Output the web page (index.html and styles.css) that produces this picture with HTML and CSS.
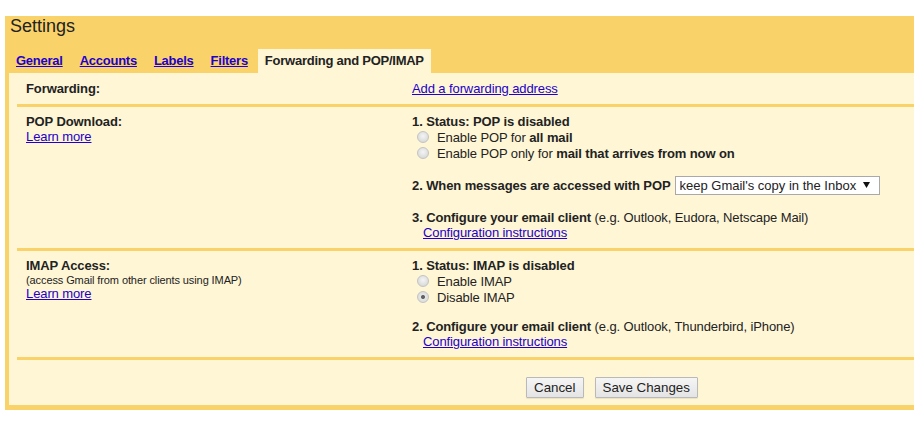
FILE: index.html
```html
<!DOCTYPE html>
<html lang="en">
<head>
<meta charset="utf-8">
<title>Settings</title>
<link rel="stylesheet" href="styles.css">
</head>
<body>
<div class="settings">
  <h1 class="title">Settings</h1>
  <nav class="tabs">
    <a class="tab" href="#">General</a>
    <a class="tab" href="#">Accounts</a>
    <a class="tab" href="#">Labels</a>
    <a class="tab" href="#">Filters</a>
    <span class="tab active">Forwarding and POP/IMAP</span>
  </nav>
  <div class="panel">
    <div class="row row-forward">
      <div class="label"><b>Forwarding:</b></div>
      <div class="value"><a href="#">Add a forwarding address</a></div>
    </div>

    <div class="row">
      <div class="label">
        <div class="line"><b>POP Download:</b></div>
        <div class="line"><a href="#">Learn more</a></div>
      </div>
      <div class="value">
        <div class="line"><b>1. Status: POP is disabled</b></div>
        <label class="option"><input type="radio" name="pop" class="radio"><span>Enable POP for <b>all mail</b></span></label>
        <label class="option"><input type="radio" name="pop" class="radio"><span>Enable POP only for <b>mail that arrives from now on</b></span></label>
        <div class="step step-select">
          <b>2. When messages are accessed with POP</b>
          <span class="select">
            <span>keep Gmail's copy in the Inbox</span>
            <svg width="7" height="6" viewBox="0 0 7 6"><path d="M0 0h7L3.5 6z" fill="#111"/></svg>
          </span>
        </div>
        <div class="step line"><b>3. Configure your email client</b> (e.g. Outlook, Eudora, Netscape Mail)</div>
        <div class="line indent"><a href="#">Configuration instructions</a></div>
      </div>
    </div>

    <div class="row">
      <div class="label">
        <div class="line"><b>IMAP Access:</b></div>
        <div class="note">(access Gmail from other clients using IMAP)</div>
        <div class="line"><a href="#">Learn more</a></div>
      </div>
      <div class="value">
        <div class="line"><b>1. Status: IMAP is disabled</b></div>
        <label class="option"><input type="radio" name="imap" class="radio"><span>Enable IMAP</span></label>
        <label class="option"><input type="radio" name="imap" class="radio" checked><span>Disable IMAP</span></label>
        <div class="step line"><b>2. Configure your email client</b> (e.g. Outlook, Thunderbird, iPhone)</div>
        <div class="line indent"><a href="#">Configuration instructions</a></div>
      </div>
    </div>

    <div class="row row-actions">
      <div class="label"></div>
      <div class="actions">
        <button class="btn" type="button">Cancel</button>
        <button class="btn" type="button">Save Changes</button>
      </div>
    </div>
  </div>
</div>
</body>
</html>
```

FILE: styles.css
```css
html, body {
  margin: 0;
  padding: 0;
  background: #ffffff;
}

body {
  font-family: "Liberation Sans", Arial, sans-serif;
  font-size: 13px;
  letter-spacing: -0.1px;
  color: #222222;
  overflow: hidden;
}

a {
  color: #2200cc;
  text-decoration: underline;
}

b {
  font-weight: bold;
}

/* outer yellow frame */
.settings {
  margin: 16px 0 0 5px;
  padding: 0 0 5px 4px;
  background: #f9d36a;
}

.title {
  margin: 0;
  padding: 0 0 13px 1px;
  font-size: 18px;
  font-weight: normal;
  line-height: 20px;
  letter-spacing: 0;
  color: #222222;
}

/* tab strip */
.tabs {
  display: flex;
  gap: 3px;
  height: 24px;
}

.tab {
  padding: 0 7px;
  line-height: 24px;
  font-weight: bold;
  letter-spacing: -0.25px;
}

.tab.active {
  background: #fff6d6;
  color: #222222;
}

/* cream content panel */
.panel {
  background: #fff6d6;
}

.row {
  display: grid;
  grid-template-columns: 386px 1fr;
  margin-left: 8px;
  padding: 7px 0 8px 9px;
  border-bottom: 3px solid #f9d36a;
  line-height: 15px;
}

.row-forward {
  padding: 8px 0 8px 9px;
}

.row-actions {
  border-bottom: none;
  padding: 17px 0 7px 9px;
}

.line {
  line-height: 15px;
}

.note {
  font-size: 11px;
  line-height: 12px;
  padding-top: 1px;
}

.indent {
  padding-left: 11px;
}

.option {
  display: flex;
  align-items: center;
  height: 16px;
  padding-left: 5px;
}

.radio {
  appearance: none;
  -webkit-appearance: none;
  width: 12px;
  height: 12px;
  margin: 0 8px 0 0;
  border: 1px solid #c3c3c3;
  border-radius: 50%;
  background: radial-gradient(circle at 50% 40%, #f4f4f4 0, #dcdcdc 70%, #cfcfcf 100%);
  box-sizing: border-box;
  flex: none;
}

.radio:checked {
  background: radial-gradient(circle, #5a5a5a 0, #6a6a6a 1.6px, #e6e6e6 2.4px, #d6d6d6 100%);
}

.step {
  margin-top: 14px;
}

.step-select {
  display: flex;
  align-items: center;
  height: 20px;
}

.step + .line.step {
  margin-top: 15px;
}

.select {
  display: inline-flex;
  align-items: center;
  justify-content: space-between;
  box-sizing: border-box;
  width: 205px;
  height: 19px;
  margin-left: 4px;
  padding: 0 9px 0 4px;
  background: #ffffff;
  border: 1px solid #a9a9a9;
  color: #222222;
  letter-spacing: 0;
}

.actions {
  display: flex;
  gap: 11px;
  padding-left: 114px;
}

.btn {
  height: 21px;
  padding: 0 7px;
  font-family: "Liberation Sans", Arial, sans-serif;
  font-size: 13.33px;
  letter-spacing: 0;
  color: #222222;
  background: linear-gradient(#f5f5f5, #e4e4e4);
  border: 1px solid #b9b9b9;
  border-radius: 1px;
  box-shadow: 0 1px 1px rgba(0, 0, 0, 0.08);
  line-height: 19px;
}
```
